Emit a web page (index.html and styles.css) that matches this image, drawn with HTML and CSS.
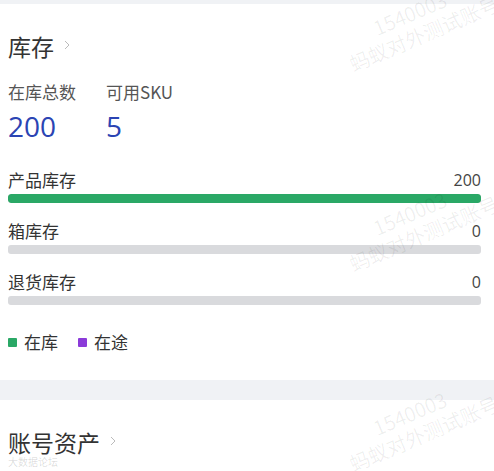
FILE: index.html
```html
<!DOCTYPE html>
<html lang="zh-CN">
<head>
<meta charset="utf-8">
<link rel="stylesheet" href="styles.css">
</head>
<body>
<div class="page">
  <section class="card stock">
    <div class="title">库存<svg class="chev" viewBox="0 0 6 10" width="6" height="10"><path d="M1 1l4 4-4 4" fill="none" stroke="#bbb" stroke-width="1"/></svg></div>
    <div class="stats">
      <div class="stat"><div class="stat-label">在库总数</div><div class="stat-num">200</div></div>
      <div class="stat"><div class="stat-label">可用SKU</div><div class="stat-num">5</div></div>
    </div>
    <div class="rows">
      <div class="row">
        <div class="row-head"><span>产品库存</span><span>200</span></div>
        <div class="bar"><div class="fill" style="width:100%"></div></div>
      </div>
      <div class="row">
        <div class="row-head"><span>箱库存</span><span>0</span></div>
        <div class="bar"><div class="fill" style="width:0%"></div></div>
      </div>
      <div class="row">
        <div class="row-head"><span>退货库存</span><span>0</span></div>
        <div class="bar"><div class="fill" style="width:0%"></div></div>
      </div>
    </div>
    <div class="legend">
      <span class="item"><i class="sq green"></i>在库</span>
      <span class="item"><i class="sq purple"></i>在途</span>
    </div>
  </section>
  <section class="card assets">
    <div class="title">账号资产<svg class="chev" viewBox="0 0 6 10" width="6" height="10"><path d="M1 1l4 4-4 4" fill="none" stroke="#bbb" stroke-width="1"/></svg></div>
  </section>
  <div class="wm wm1"><div>1540003</div><div>蚂蚁对外测试账号</div></div>
  <div class="wm wm2"><div>1540003</div><div>蚂蚁对外测试账号</div></div>
  <div class="wm wm3"><div>1540003</div><div>蚂蚁对外测试账号</div></div>
  <div class="logo-wm">大数据论坛</div>
</div>
</body>
</html>
```
FILE: styles.css
```css
html, body {
  margin: 0;
  padding: 0;
  background: #f0f2f5;
}
body {
  font-family: "Noto Sans CJK SC", "Noto Sans", sans-serif;
  color: #333;
  overflow: hidden;
}
.page {
  position: relative;
  width: 494px;
  height: 471px;
  overflow: hidden;
  padding-top: 4px;
  box-sizing: border-box;
}
.card {
  background: #fff;
  padding: 0 13px 0 8px;
}
.stock {
  height: 376px;
  padding-top: 26px;
  box-sizing: border-box;
  margin-bottom: 20px;
}
.assets {
  height: 80px;
  padding-top: 26px;
  box-sizing: border-box;
}
.title {
  font-size: 23px;
  line-height: 32px;
  color: #333;
  display: flex;
  align-items: center;
}
.chev {
  margin-left: 10px;
  margin-top: -2px;
}
.stats {
  display: flex;
  gap: 30px;
  margin-top: 20px;
}
.stat-label {
  font-size: 17px;
  line-height: 20px;
  color: #555;
}
.stat-num {
  font-family: "Open Sans", "Noto Sans", sans-serif;
  font-size: 28px;
  line-height: 30px;
  color: #2b44b3;
  margin-top: 9px;
}
.rows {
  margin-top: 28px;
  display: flex;
  flex-direction: column;
  gap: 17px;
}
.row-head {
  display: flex;
  justify-content: space-between;
  font-size: 17px;
  line-height: 22px;
  color: #333;
}
.row-head span:last-child {
  font-family: "Open Sans", "Noto Sans", sans-serif;
  font-size: 16px;
  color: #444;
}
.bar {
  margin-top: 3px;
  height: 9px;
  border-radius: 3px;
  background: #d9dadd;
  overflow: hidden;
}
.fill {
  height: 100%;
  background: #2aa866;
  border-radius: 3px;
}
.legend {
  display: flex;
  gap: 20px;
  margin-top: 26px;
  font-size: 17px;
  line-height: 22px;
}
.item {
  display: flex;
  align-items: center;
}
.sq {
  width: 9px;
  height: 9px;
  border-radius: 1px;
  margin-right: 7px;
  display: inline-block;
}
.green { background: #2aa866; }
.purple { background: #8b3bd9; }
.wm {
  position: absolute;
  color: rgba(0, 0, 0, 0.065);
  transform: rotate(-23deg);
  transform-origin: left bottom;
  pointer-events: none;
  font-size: 20px;
  line-height: 24px;
  white-space: nowrap;
}
.wm div:first-child { padding-left: 36px; }
.wm1 { left: 355px; top: 28px; }
.wm2 { left: 355px; top: 228px; }
.wm3 { left: 355px; top: 428px; }
.logo-wm {
  position: absolute;
  left: 8px;
  top: 456px;
  font-size: 10px;
  line-height: 12px;
  color: rgba(0,0,0,0.15);
}
```
